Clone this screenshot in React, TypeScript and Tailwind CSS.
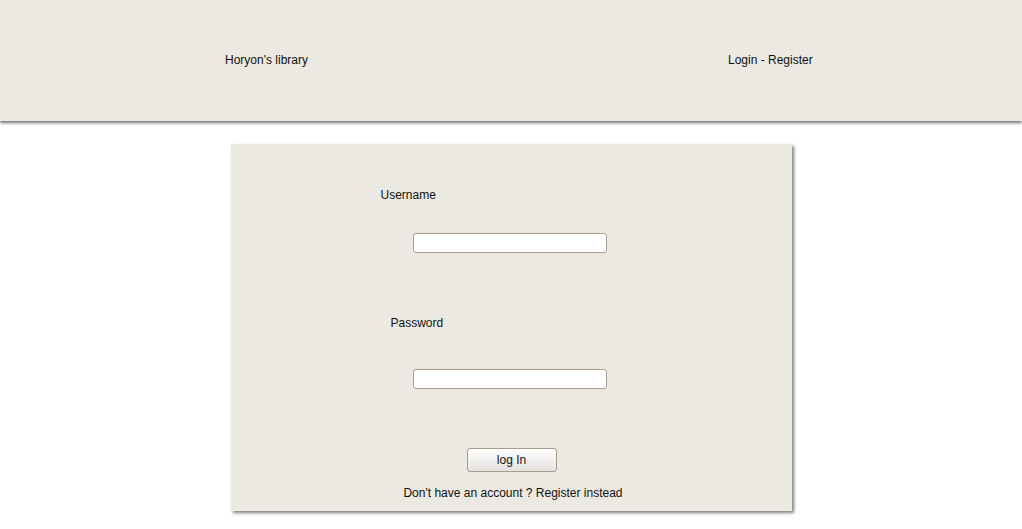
export default function App() {
  return (
    <div className="min-h-screen bg-white font-['Liberation_Sans',Arial,sans-serif] text-[12px] text-[#111]">
      <header className="h-[121px] pb-[2px] bg-[#ece9e3] flex items-center shadow-[0_2px_3px_rgba(0,0,0,0.55)] relative">
        <div className="pl-[225px] w-[728px]">Horyon's library</div>
        <div>Login - Register</div>
      </header>

      <div className="pt-[23px]">
        <form className="mx-auto w-[561px] bg-[#ece9e3] pt-[44px] pb-[11px] shadow-[2px_2px_3px_rgba(0,0,0,0.5)]">
          <label className="block pl-[150px] leading-[14px]">Username</label>
          <input
            type="text"
            className="block ml-[182px] mt-[31px] w-[194px] h-[20px] bg-white border border-[#a89c8c] rounded-[3px]"
          />
          <label className="block pl-[160px] mt-[63px] leading-[14px]">Password</label>
          <input
            type="password"
            className="block ml-[182px] mt-[39px] w-[194px] h-[20px] bg-white border border-[#a89c8c] rounded-[3px]"
          />
          <button
            type="button"
            className="block ml-[236px] mt-[59px] w-[90px] h-[24px] border border-[#a89c8c] rounded-[3px] bg-gradient-to-b from-white to-[#e4e2df] text-[12px]"
          >
            log In
          </button>
          <p className="mt-[14px] pl-[4px] text-center leading-[14px]">Don't have an account ? Register instead</p>
        </form>
      </div>
    </div>
  )
}
